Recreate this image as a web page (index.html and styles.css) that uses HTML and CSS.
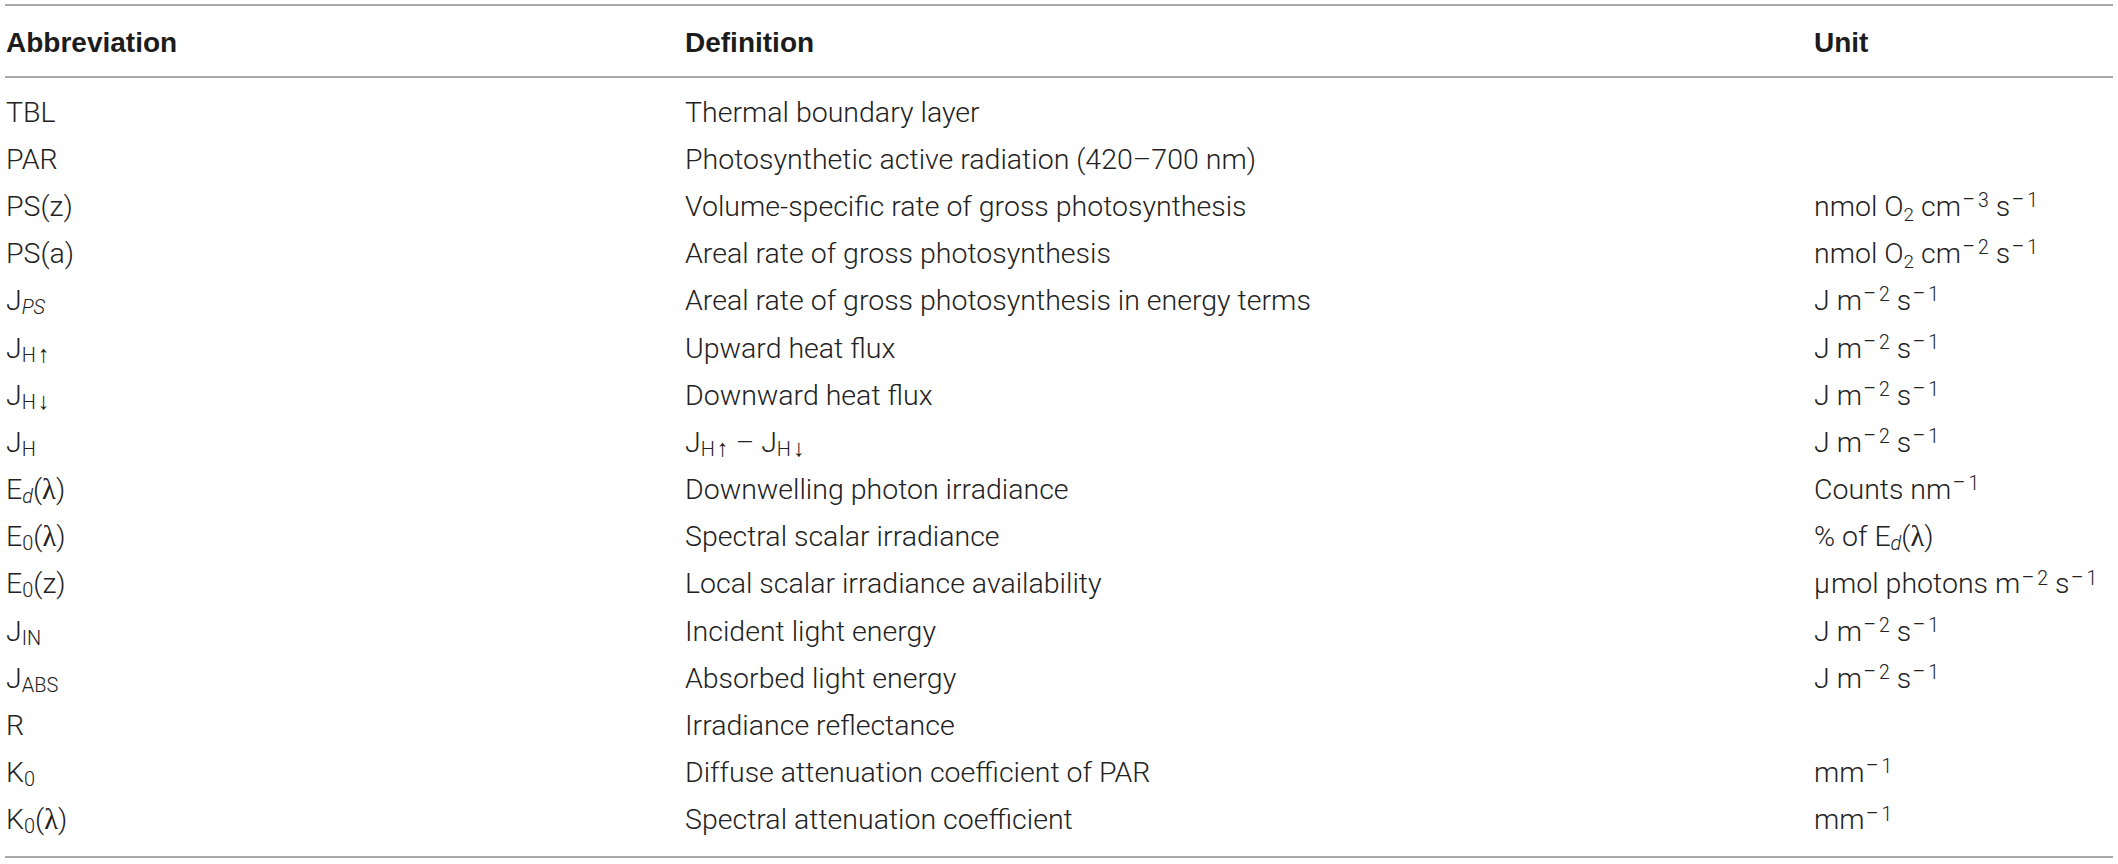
FILE: index.html
```html
<!DOCTYPE html>
<html lang="en">
<head>
<meta charset="utf-8">
<title>Abbreviations</title>
<link rel="stylesheet" href="styles.css">
</head>
<body>
<div class="page">
<table class="abbr-table">
  <colgroup>
    <col class="c-abbr">
    <col class="c-def">
    <col class="c-unit">
  </colgroup>
  <thead>
    <tr><th>Abbreviation</th><th>Definition</th><th>Unit</th></tr>
  </thead>
  <tbody>
    <tr><td>TBL</td><td>Thermal boundary layer</td><td></td></tr>
    <tr><td>PAR</td><td>Photosynthetic active radiation (420–700 nm)</td><td></td></tr>
    <tr><td>PS(z)</td><td>Volume-specific rate of gross photosynthesis</td><td>nmol O<sub class="s2">2</sub> cm<sup><span class="mn">−</span>3</sup> s<sup><span class="mn">−</span>1</sup></td></tr>
    <tr><td>PS(a)</td><td>Areal rate of gross photosynthesis</td><td>nmol O<sub class="s2">2</sub> cm<sup><span class="mn">−</span>2</sup> s<sup><span class="mn">−</span>1</sup></td></tr>
    <tr><td>J<sub><i>PS</i></sub></td><td>Areal rate of gross photosynthesis in energy terms</td><td>J m<sup><span class="mn">−</span>2</sup> s<sup><span class="mn">−</span>1</sup></td></tr>
    <tr><td>J<sub>H<span class="arr">↑</span></sub></td><td>Upward heat flux</td><td>J m<sup><span class="mn">−</span>2</sup> s<sup><span class="mn">−</span>1</sup></td></tr>
    <tr><td>J<sub>H<span class="arr">↓</span></sub></td><td>Downward heat flux</td><td>J m<sup><span class="mn">−</span>2</sup> s<sup><span class="mn">−</span>1</sup></td></tr>
    <tr><td>J<sub>H</sub></td><td>J<sub>H<span class="arr">↑</span></sub> – J<sub>H<span class="arr">↓</span></sub></td><td>J m<sup><span class="mn">−</span>2</sup> s<sup><span class="mn">−</span>1</sup></td></tr>
    <tr><td>E<sub><i>d</i></sub>(<span class="gr">λ</span>)</td><td>Downwelling photon irradiance</td><td>Counts nm<sup><span class="mn">−</span>1</sup></td></tr>
    <tr><td>E<sub>0</sub>(<span class="gr">λ</span>)</td><td>Spectral scalar irradiance</td><td>% of E<sub><i>d</i></sub>(<span class="gr">λ</span>)</td></tr>
    <tr><td>E<sub>0</sub>(z)</td><td>Local scalar irradiance availability</td><td><span class="mu">μ</span>mol photons m<sup><span class="mn">−</span>2</sup> s<sup><span class="mn">−</span>1</sup></td></tr>
    <tr><td>J<sub>IN</sub></td><td>Incident light energy</td><td>J m<sup><span class="mn">−</span>2</sup> s<sup><span class="mn">−</span>1</sup></td></tr>
    <tr><td>J<sub>ABS</sub></td><td>Absorbed light energy</td><td>J m<sup><span class="mn">−</span>2</sup> s<sup><span class="mn">−</span>1</sup></td></tr>
    <tr><td>R</td><td>Irradiance reflectance</td><td></td></tr>
    <tr><td>K<sub>0</sub></td><td>Diffuse attenuation coefficient of PAR</td><td>mm<sup><span class="mn">−</span>1</sup></td></tr>
    <tr><td>K<sub>0</sub>(<span class="gr">λ</span>)</td><td>Spectral attenuation coefficient</td><td>mm<sup><span class="mn">−</span>1</sup></td></tr>
  </tbody>
</table>
</div>
</body>
</html>
```
FILE: styles.css
```css
html, body {
  margin: 0;
  padding: 0;
  background: #ffffff;
}

body {
  font-family: "Liberation Sans", Arial, Helvetica, sans-serif;
  color: #222222;
}

.page {
  padding: 4px 5px 0 5px;
}

.abbr-table {
  width: 2108px;
  border-collapse: collapse;
  table-layout: fixed;
  border-top: 2px solid #a8a8a8;
  border-bottom: 2px solid #a8a8a8;
}

.c-abbr { width: 679px; }
.c-def { width: 1129px; }
.c-unit { width: 300px; }

.abbr-table th,
.abbr-table td {
  text-align: left;
  line-height: 32px;
  white-space: nowrap;
  vertical-align: baseline;
}

.abbr-table td {
  font-family: Roboto, "Liberation Sans", Arial, sans-serif;
  font-weight: 300;
  font-size: 28.5px;
  padding: 8px 0 7.2px 1px;
}

.abbr-table th {
  font-size: 28px;
  font-weight: bold;
  color: #1c1c1c;
  padding: 21px 0 17px 1px;
  border-bottom: 2px solid #a8a8a8;
}

.abbr-table tbody tr:first-child td {
  padding-top: 18.6px;
}

.abbr-table tbody tr:last-child td {
  padding-bottom: 19.7px;
}

.abbr-table sub,
.abbr-table sup {
  line-height: 0;
  font-size: 0.7em;
}

.abbr-table sub {
  vertical-align: -0.22em;
}

.abbr-table sub.s2 {
  font-size: 0.66em;
  vertical-align: -0.28em;
}

.abbr-table sup {
  font-size: 0.68em;
  vertical-align: 0.46em;
  margin-left: 1px;
}

.mn {
  font-size: 1.2em;
  margin-right: 0.12em;
}

.arr {
  font-family: "Liberation Serif", "Times New Roman", serif;
  font-weight: normal;
  font-size: 1.2em;
  margin-left: 0.08em;
}

.gr {
  font-family: "Liberation Serif", "Times New Roman", serif;
}

.mu {
  font-weight: 300;
  margin-right: 0.04em;
}
```
